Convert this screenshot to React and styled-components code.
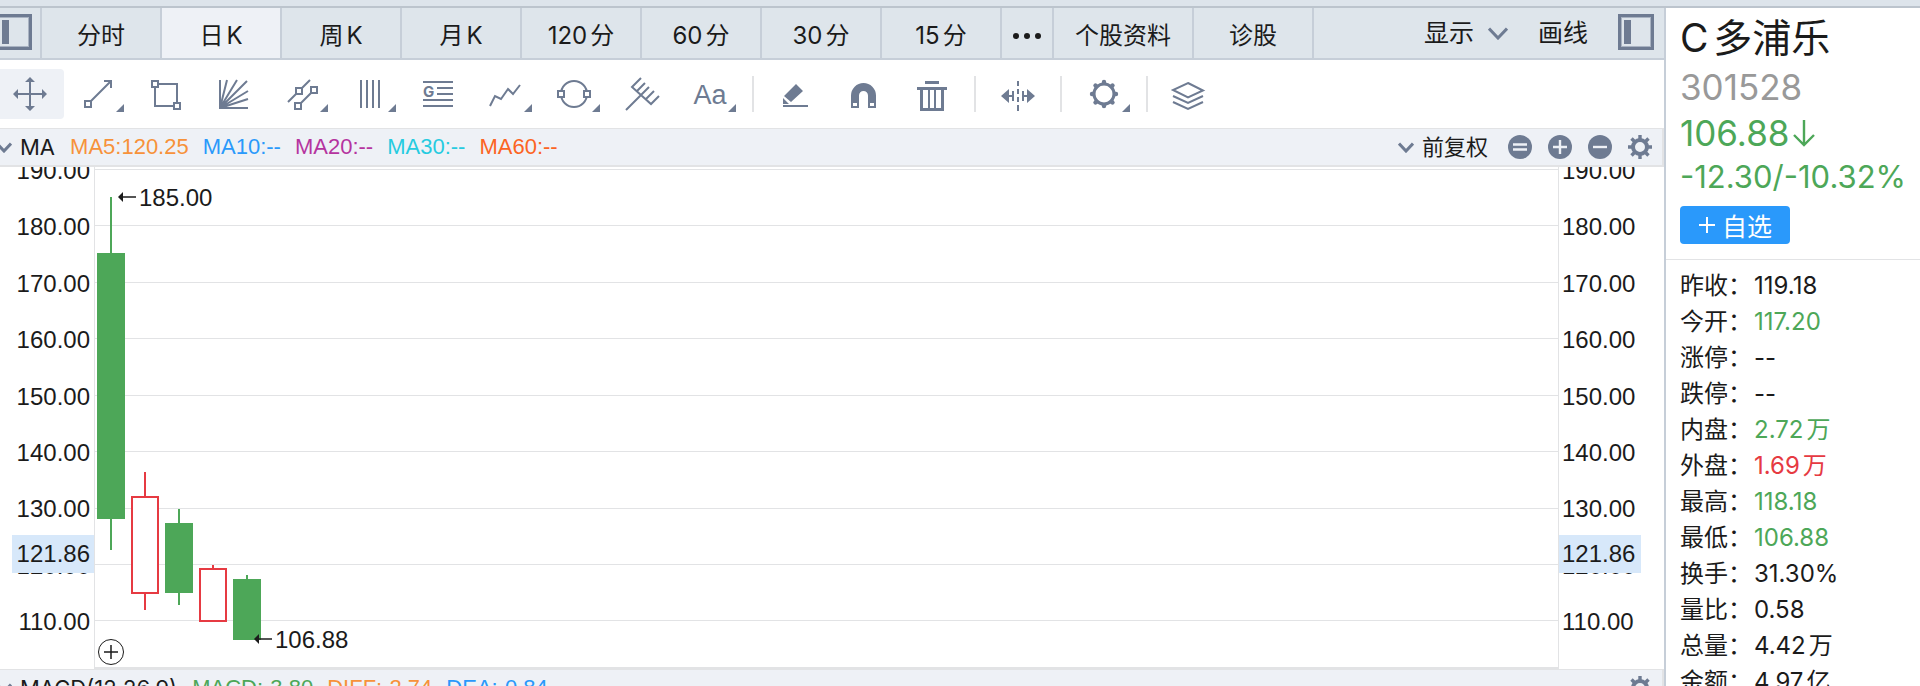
import React from "react";
import styled, { createGlobalStyle } from "styled-components";

const GREEN = "#4da758";
const RED = "#e63a42";
const SLATE = "#6e7b92";
const LINE = "#e2e3e5";
const BORDER = "#c6ced8";
const TEXT = "#1b1b1b";

const GlobalStyle = createGlobalStyle`
  * {
    box-sizing: border-box;
  }
  body {
    margin: 0;
    background: #ffffff;
    color: ${TEXT};
    font-family: Inter, "Noto Sans CJK SC", sans-serif;
    font-size: 24px;
    text-autospace: normal;
  }
  button {
    padding: 0;
    border: 0;
    background: none;
    color: inherit;
    font: inherit;
    cursor: pointer;
  }
`;

const Page = styled.div`
  height: 100vh;
  display: flex;
  flex-direction: column;
  overflow: hidden;
`;

const TopStrip = styled.div`
  flex: none;
  height: 8px;
  background: #dde4eb;
  border-bottom: 2px solid #bcc4cd;
`;

const Content = styled.div`
  flex: 1;
  min-height: 0;
  display: flex;
`;

const Main = styled.main`
  flex: 1;
  min-width: 0;
  display: flex;
  flex-direction: column;
`;

const TabBar = styled.nav`
  flex: none;
  height: 52px;
  display: flex;
  background: #dee5eb;
  border-bottom: 2px solid ${BORDER};
`;

const Tab = styled.button`
  width: ${(props) => props.$width || 120}px;
  padding-top: 6px;
  border-right: 2px solid ${BORDER};
  background: ${(props) => (props.$active ? "#eef1f6" : "transparent")};
  line-height: 32px;
  white-space: nowrap;

  svg {
    display: block;
    margin: 0 auto;
  }
`;

const PanelTab = styled(Tab)`
  display: flex;
  align-items: flex-start;

  svg {
    flex: none;
    margin: 0 0 0 -4px;
  }
`;

const TabTools = styled.div`
  margin-left: auto;
  padding-right: 10px;
  display: flex;
  align-items: center;
  gap: 30px;
  font-size: 25px;
  line-height: 32px;
`;

const ToolButton = styled.button`
  display: flex;
  align-items: center;
  gap: 14px;
`;

const PanelButton = styled.button`
  display: flex;
  padding-bottom: 2px;
`;

const Toolbar = styled.div`
  flex: none;
  height: 68px;
  margin-left: -4px;
  display: flex;
  align-items: center;
`;

const DrawButton = styled.button`
  flex: none;
  width: 68px;
  height: 50px;
  border-radius: 4px;
  background: ${(props) => (props.$active ? "#eef1f6" : "transparent")};

  svg {
    display: block;
  }
`;

const Separator = styled.span`
  width: 2px;
  height: 36px;
  margin: 0 8px;
  background: ${LINE};
`;

const IndicatorBar = styled.div`
  flex: none;
  height: 39px;
  padding-right: 10px;
  display: flex;
  align-items: center;
  background: #eef1f6;
  border: solid ${LINE};
  border-width: 1px 2px 2px 0;
  font-size: 22px;
  line-height: 30px;
  white-space: nowrap;
`;

const IndicatorName = styled.button`
  display: flex;
  align-items: center;
  gap: 8px;
  margin-left: -4px;
`;

const Values = styled.div`
  display: flex;
  gap: 14px;
  margin-left: 15px;
  font-family: "Liberation Sans", sans-serif;
`;

const Value = styled.span`
  color: ${(props) => props.$color};
`;

const IndicatorTools = styled.div`
  margin-left: auto;
  display: flex;
  align-items: center;
  gap: 16px;

  button {
    display: flex;
    align-items: center;
  }
`;

const AdjustButton = styled.button`
  gap: 8px;
  margin-right: 4px;
`;

const ChartRow = styled.section`
  flex: none;
  height: 502px;
  display: flex;
  overflow: hidden;
`;

const Axis = styled.div`
  position: relative;
  flex: none;
  width: ${(props) => (props.$right ? 105 : 94)}px;
  height: 475px;
  margin-top: -8px;
  padding: ${(props) => (props.$right ? "0 0 0 3px" : "0 4px 0 0")};
  display: flex;
  flex-direction: column;
  justify-content: space-between;
  align-items: ${(props) => (props.$right ? "flex-start" : "flex-end")};
  font-family: "Liberation Sans", sans-serif;
  line-height: 24px;
`;

const PriceTag = styled.span`
  position: absolute;
  top: 376px;
  ${(props) => (props.$right ? "left: 0; padding-left: 3px;" : "right: 0; padding-right: 4px; text-align: right;")}
  width: 82px;
  background: #d7e8fa;
  line-height: 38px;
`;

const Plot = styled.div`
  flex: 1;
  min-width: 0;
  border: solid ${LINE};
  border-width: 0 1px 2px 1px;

  svg {
    display: block;
  }
`;

const Side = styled.aside`
  flex: none;
  width: 256px;
  border-left: 2px solid ${BORDER};
  white-space: nowrap;
  overflow: hidden;
`;

const Quote = styled.header`
  height: 252px;
  padding: 4px 0 0 14px;
  border-bottom: 1px solid ${LINE};
`;

const StockName = styled.h1`
  margin: 0;
  font-size: 39px;
  font-weight: 400;
  line-height: 52px;
`;

const StockCode = styled.div`
  color: #999999;
  font-size: 35px;
  line-height: 46px;
`;

const Price = styled.div`
  display: flex;
  align-items: center;
  gap: 4px;
  color: ${GREEN};
  font-size: 35px;
  line-height: 46px;
`;

const Change = styled.div`
  color: ${GREEN};
  font-size: 31px;
  line-height: 42px;
`;

const WatchButton = styled.button`
  width: 110px;
  height: 38px;
  margin-top: 8px;
  display: flex;
  align-items: center;
  justify-content: center;
  gap: 6px;
  border-radius: 4px;
  background: #2a99fb;
  color: #ffffff;
  font-size: 25px;
`;

const Stats = styled.dl`
  margin: 0;
  padding: 8px 0 0 14px;
  display: grid;
  grid-template-columns: 74px 1fr;
  line-height: 36px;
`;

const Label = styled.dt`
  margin: 0;
`;

const Stat = styled.dd`
  margin: 0;
  color: ${(props) => props.$color || TEXT};
`;

const PanelIcon = () => (
  <svg width="36" height="36" viewBox="0 0 36 36" fill="none">
    <rect x="3" y="3" width="30" height="30" stroke="#a9b3c2" strokeWidth="2" />
    <rect x="1.5" y="1.5" width="33" height="33" stroke={SLATE} strokeWidth="3" />
    <rect x="6" y="6" width="7" height="24" fill={SLATE} />
  </svg>
);

const Chevron = ({ width = 16, height = 11 }) => (
  <svg width={width} height={height} viewBox={`0 0 ${width} ${height}`} fill="none">
    <path
      d={`M1 1.5L${width / 2} ${height - 2}L${width - 1} 1.5`}
      stroke={SLATE}
      strokeWidth="3"
    />
  </svg>
);

const CircleIcon = ({ d }) => (
  <svg width="24" height="24" viewBox="0 0 24 24">
    <circle cx="12" cy="12" r="12" fill={SLATE} />
    <path d={d} stroke="#eef1f6" strokeWidth="2.4" />
  </svg>
);

const GearIcon = () => (
  <svg width="24" height="24" viewBox="0 0 24 24" fill="none" stroke={SLATE}>
    <circle cx="12" cy="12" r="7" strokeWidth="4" />
    <path
      d="M12 0v5M12 19v5M0 12h5M19 12h5M3.5 3.5L7 7M17 17l3.5 3.5M20.5 3.5L17 7M7 17l-3.5 3.5"
      strokeWidth="3.4"
    />
  </svg>
);

const Node = ({ x, y }) => <rect x={x - 3} y={y - 3} width="6" height="6" fill="#ffffff" />;

const tools = [
  {
    name: "move",
    active: true,
    icon: (
      <>
        <path d="M34 11v28M20 25h28" />
        <path
          d="M34 8l5 5H29zM34 42l5-5H29zM17 25l5-5v10zM51 25l-5-5v10z"
          fill={SLATE}
          stroke="none"
        />
      </>
    ),
  },
  {
    name: "line",
    menu: true,
    icon: (
      <>
        <path d="M24 35L47 12M40 12h7v7" />
        <Node x={24} y={35} />
      </>
    ),
  },
  {
    name: "rectangle",
    icon: (
      <>
        <rect x="23" y="15" width="22" height="22" />
        <Node x={23} y={15} />
        <Node x={45} y={37} />
      </>
    ),
  },
  {
    name: "fan",
    icon: <path d="M20 11v28h28M20 39l7-28M20 39l17-28M20 39L47 12M20 39l28-17M20 39l28-9" />,
  },
  {
    name: "channel",
    menu: true,
    icon: (
      <>
        <path d="M20 33L42 11M30 37l16-16" />
        <Node x={31} y={22} />
        <Node x={30} y={37} />
        <Node x={46} y={21} />
      </>
    ),
  },
  {
    name: "cycle lines",
    menu: true,
    icon: <path d="M25 11v28M31 11v28M37 11v28M43 11v28" />,
  },
  {
    name: "golden section",
    icon: (
      <>
        <path d="M19 13h30M33 19h16M33 25h16M19 31h30M19 37h30" />
        <text x="19" y="28" fontSize="15" fontWeight="700" fill={SLATE} stroke="none">
          G
        </text>
      </>
    ),
  },
  {
    name: "wave",
    menu: true,
    icon: <path d="M18 37l5-10 6 3 7-10 5 5 7-9" />,
  },
  {
    name: "ellipse",
    menu: true,
    icon: (
      <>
        <circle cx="34" cy="25" r="13" />
        <Node x={21} y={25} />
        <Node x={47} y={25} />
      </>
    ),
  },
  {
    name: "pitchfork",
    icon: <path d="M18 41l15-15M33 9l-9 9 19 17 8-8M29 22l8-8M33 26l8-8M38 30l8-8" />,
  },
  {
    name: "text",
    menu: true,
    icon: (
      <text
        x="34"
        y="35"
        textAnchor="middle"
        fontFamily="Liberation Sans, sans-serif"
        fontSize="27"
        fill={SLATE}
        stroke="none"
      >
        Aa
      </text>
    ),
  },
  {
    name: "edit",
    split: true,
    icon: (
      <>
        <path d="M34 15l7 7-12 11-7-6zM21 29l6 6h-6z" fill={SLATE} stroke="none" />
        <path d="M21 37h25" />
      </>
    ),
  },
  {
    name: "magnet",
    icon: (
      <path
        d="M21 39V26.5a12.5 12.5 0 0 1 25 0V39h-8V26.5a4.5 4.5 0 0 0-9 0V39zM23 34v3h4v-3zM40 34v3h4v-3z"
        fill={SLATE}
        fillRule="evenodd"
        stroke="none"
      />
    ),
  },
  {
    name: "delete",
    icon: (
      <>
        <path d="M27 13.5h14M19 19.5h30M23.5 20v20.5h21V20" strokeWidth="3" />
        <path d="M31 21v19M37 21v19" />
      </>
    ),
  },
  {
    name: "spacing",
    split: true,
    icon: (
      <>
        <path d="M34 12v5M34 20v5M34 28v5M34 36v6M29 22v10M39 22v10M24 27h5M39 27h5" />
        <path d="M17 27l8-7v14zM51 27l-8-7v14z" fill={SLATE} stroke="none" />
      </>
    ),
  },
  {
    name: "settings",
    split: true,
    menu: true,
    icon: (
      <>
        <circle cx="34" cy="25" r="10" strokeWidth="3" />
        <path
          d="M34 13v1M34 36v1M22 25h1M45 25h1M25.5 16.5l1 1M41.5 32.5l1 1M42.5 16.5l-1 1M26.5 32.5l-1 1"
          strokeWidth="4.4"
          strokeLinecap="round"
        />
      </>
    ),
  },
  {
    name: "layers",
    split: true,
    icon: <path d="M32 14l15 7.5-15 7-15-7.5zM17 27l15 7 15-7M17 33l15 7 15-7" />,
  },
];

const tabs = ["分时", "日K", "周K", "月K", "120分", "60分", "30分", "15分"];

const averages = [
  { text: "MA5:120.25", color: "#f7923a" },
  { text: "MA10:--", color: "#2a99fb" },
  { text: "MA20:--", color: "#b5349f" },
  { text: "MA30:--", color: "#26cbe0" },
  { text: "MA60:--", color: "#fc6423" },
];

const macd = [
  { text: "MACD:-3.80", color: GREEN },
  { text: "DIFF:-2.74", color: "#f7923a" },
  { text: "DEA:-0.84", color: "#2a99fb" },
];

const prices = ["190.00", "180.00", "170.00", "160.00", "150.00", "140.00", "130.00", "120.00", "110.00"];

const gridLines = [2, 58, 115, 171, 228, 284, 341, 397, 453];

// x is the left edge of the body, the other values are heights in the plot
const candles = [
  { x: 2, high: 30, top: 86, bottom: 352, low: 383 },
  { x: 36, high: 305, top: 329, bottom: 427, low: 443, up: true },
  { x: 70, high: 342, top: 356, bottom: 426, low: 438 },
  { x: 104, high: 398, top: 401, bottom: 455, low: 455, up: true },
  { x: 138, high: 408, top: 412, bottom: 473, low: 473 },
];

const stats = [
  { label: "昨收", value: "119.18" },
  { label: "今开", value: "117.20", color: GREEN },
  { label: "涨停", value: "--" },
  { label: "跌停", value: "--" },
  { label: "内盘", value: "2.72万", color: GREEN },
  { label: "外盘", value: "1.69万", color: RED },
  { label: "最高", value: "118.18", color: GREEN },
  { label: "最低", value: "106.88", color: GREEN },
  { label: "换手", value: "31.30%" },
  { label: "量比", value: "0.58" },
  { label: "总量", value: "4.42万" },
  { label: "金额", value: "4.97亿" },
];

const Candle = ({ x, high, top, bottom, low, up }) => {
  const color = up ? RED : GREEN;
  return (
    <g stroke={color} strokeWidth="2">
      <path d={`M${x + 14} ${high}V${top}M${x + 14} ${bottom}V${low}`} />
      <rect
        x={x + 1}
        y={top + 1}
        width="26"
        height={bottom - top - 2}
        fill={up ? "#ffffff" : color}
      />
    </g>
  );
};

const Marker = ({ x, y, text }) => (
  <g fill={TEXT}>
    <path d={`M${x} ${y}l5-5v10z`} />
    <path d={`M${x + 4} ${y}h14`} stroke={TEXT} strokeWidth="1.5" />
    <text x={x + 21} y={y + 9} fontFamily="Liberation Sans, sans-serif" fontSize="24">
      {text}
    </text>
  </g>
);

const Chart = () => (
  <svg width="100%" height="500" fill="none">
    {gridLines.map((y) => (
      <rect key={y} x="0" y={y} width="100%" height="1" fill={LINE} />
    ))}
    {candles.map((candle) => (
      <Candle key={candle.x} {...candle} />
    ))}
    <Marker x={23} y={30} text="185.00" />
    <Marker x={159} y={472} text="106.88" />
    <circle cx="16" cy="485" r="12.5" stroke={TEXT} />
    <path d="M9 485h14M16 478v14" stroke={TEXT} strokeWidth="1.5" />
  </svg>
);

const PriceAxis = ({ right }) => (
  <Axis $right={right}>
    {prices.map((price) => (
      <span key={price}>{price}</span>
    ))}
    <PriceTag $right={right}>121.86</PriceTag>
  </Axis>
);

const App = () => {
  return (
    <Page>
      <GlobalStyle />
      <TopStrip />
      <Content>
        <Main>
          <TabBar>
            <PanelTab $width={42} aria-label="panel">
              <PanelIcon />
            </PanelTab>
            {tabs.map((tab) => (
              <Tab key={tab} $active={tab === "日K"}>
                {tab}
              </Tab>
            ))}
            <Tab $width={52} aria-label="more">
              <svg width="30" height="8" viewBox="0 0 30 8" fill={TEXT}>
                <circle cx="4" cy="4" r="3" />
                <circle cx="15" cy="4" r="3" />
                <circle cx="26" cy="4" r="3" />
              </svg>
            </Tab>
            <Tab $width={140}>个股资料</Tab>
            <Tab>诊股</Tab>
            <TabTools>
              <ToolButton>
                显示
                <Chevron width={20} height={13} />
              </ToolButton>
              <ToolButton>画线</ToolButton>
              <PanelButton aria-label="panel">
                <PanelIcon />
              </PanelButton>
            </TabTools>
          </TabBar>
          <Toolbar>
            {tools.map((tool) => (
              <React.Fragment key={tool.name}>
                {tool.split && <Separator />}
                <DrawButton $active={tool.active} aria-label={tool.name}>
                  <svg width="68" height="50" fill="none" stroke={SLATE} strokeWidth="2">
                    {tool.icon}
                    {tool.menu && <path d="M60 35v8h-8z" fill={SLATE} stroke="none" />}
                  </svg>
                </DrawButton>
              </React.Fragment>
            ))}
          </Toolbar>
          <IndicatorBar>
            <IndicatorName>
              <Chevron />
              MA
            </IndicatorName>
            <Values>
              {averages.map((item) => (
                <Value key={item.text} $color={item.color}>
                  {item.text}
                </Value>
              ))}
            </Values>
            <IndicatorTools>
              <AdjustButton>
                <Chevron />
                前复权
              </AdjustButton>
              <button aria-label="reset">
                <CircleIcon d="M5 9.5h14M5 14.5h14" />
              </button>
              <button aria-label="zoom in">
                <CircleIcon d="M5 12h14M12 5v14" />
              </button>
              <button aria-label="zoom out">
                <CircleIcon d="M5 12h14" />
              </button>
              <button aria-label="settings">
                <GearIcon />
              </button>
            </IndicatorTools>
          </IndicatorBar>
          <ChartRow>
            <PriceAxis />
            <Plot>
              <Chart />
            </Plot>
            <PriceAxis right />
          </ChartRow>
          <IndicatorBar>
            <IndicatorName>
              <Chevron />
              MACD(12,26,9)
            </IndicatorName>
            <Values>
              {macd.map((item) => (
                <Value key={item.text} $color={item.color}>
                  {item.text}
                </Value>
              ))}
            </Values>
            <IndicatorTools>
              <button aria-label="settings">
                <GearIcon />
              </button>
            </IndicatorTools>
          </IndicatorBar>
        </Main>
        <Side>
          <Quote>
            <StockName>C多浦乐</StockName>
            <StockCode>301528</StockCode>
            <Price>
              106.88
              <svg width="22" height="28" viewBox="0 0 22 28" fill="none">
                <path d="M11 1v25M1 16l10 10 10-10" stroke={GREEN} strokeWidth="2.4" />
              </svg>
            </Price>
            <Change>-12.30/-10.32%</Change>
            <WatchButton>
              <svg width="18" height="18" viewBox="0 0 18 18" stroke="#ffffff" strokeWidth="2">
                <path d="M1 9h16M9 1v16" />
              </svg>
              自选
            </WatchButton>
          </Quote>
          <Stats>
            {stats.map((item) => (
              <React.Fragment key={item.label}>
                <Label>{item.label}：</Label>
                <Stat $color={item.color}>{item.value}</Stat>
              </React.Fragment>
            ))}
          </Stats>
        </Side>
      </Content>
    </Page>
  );
};

export default App;
